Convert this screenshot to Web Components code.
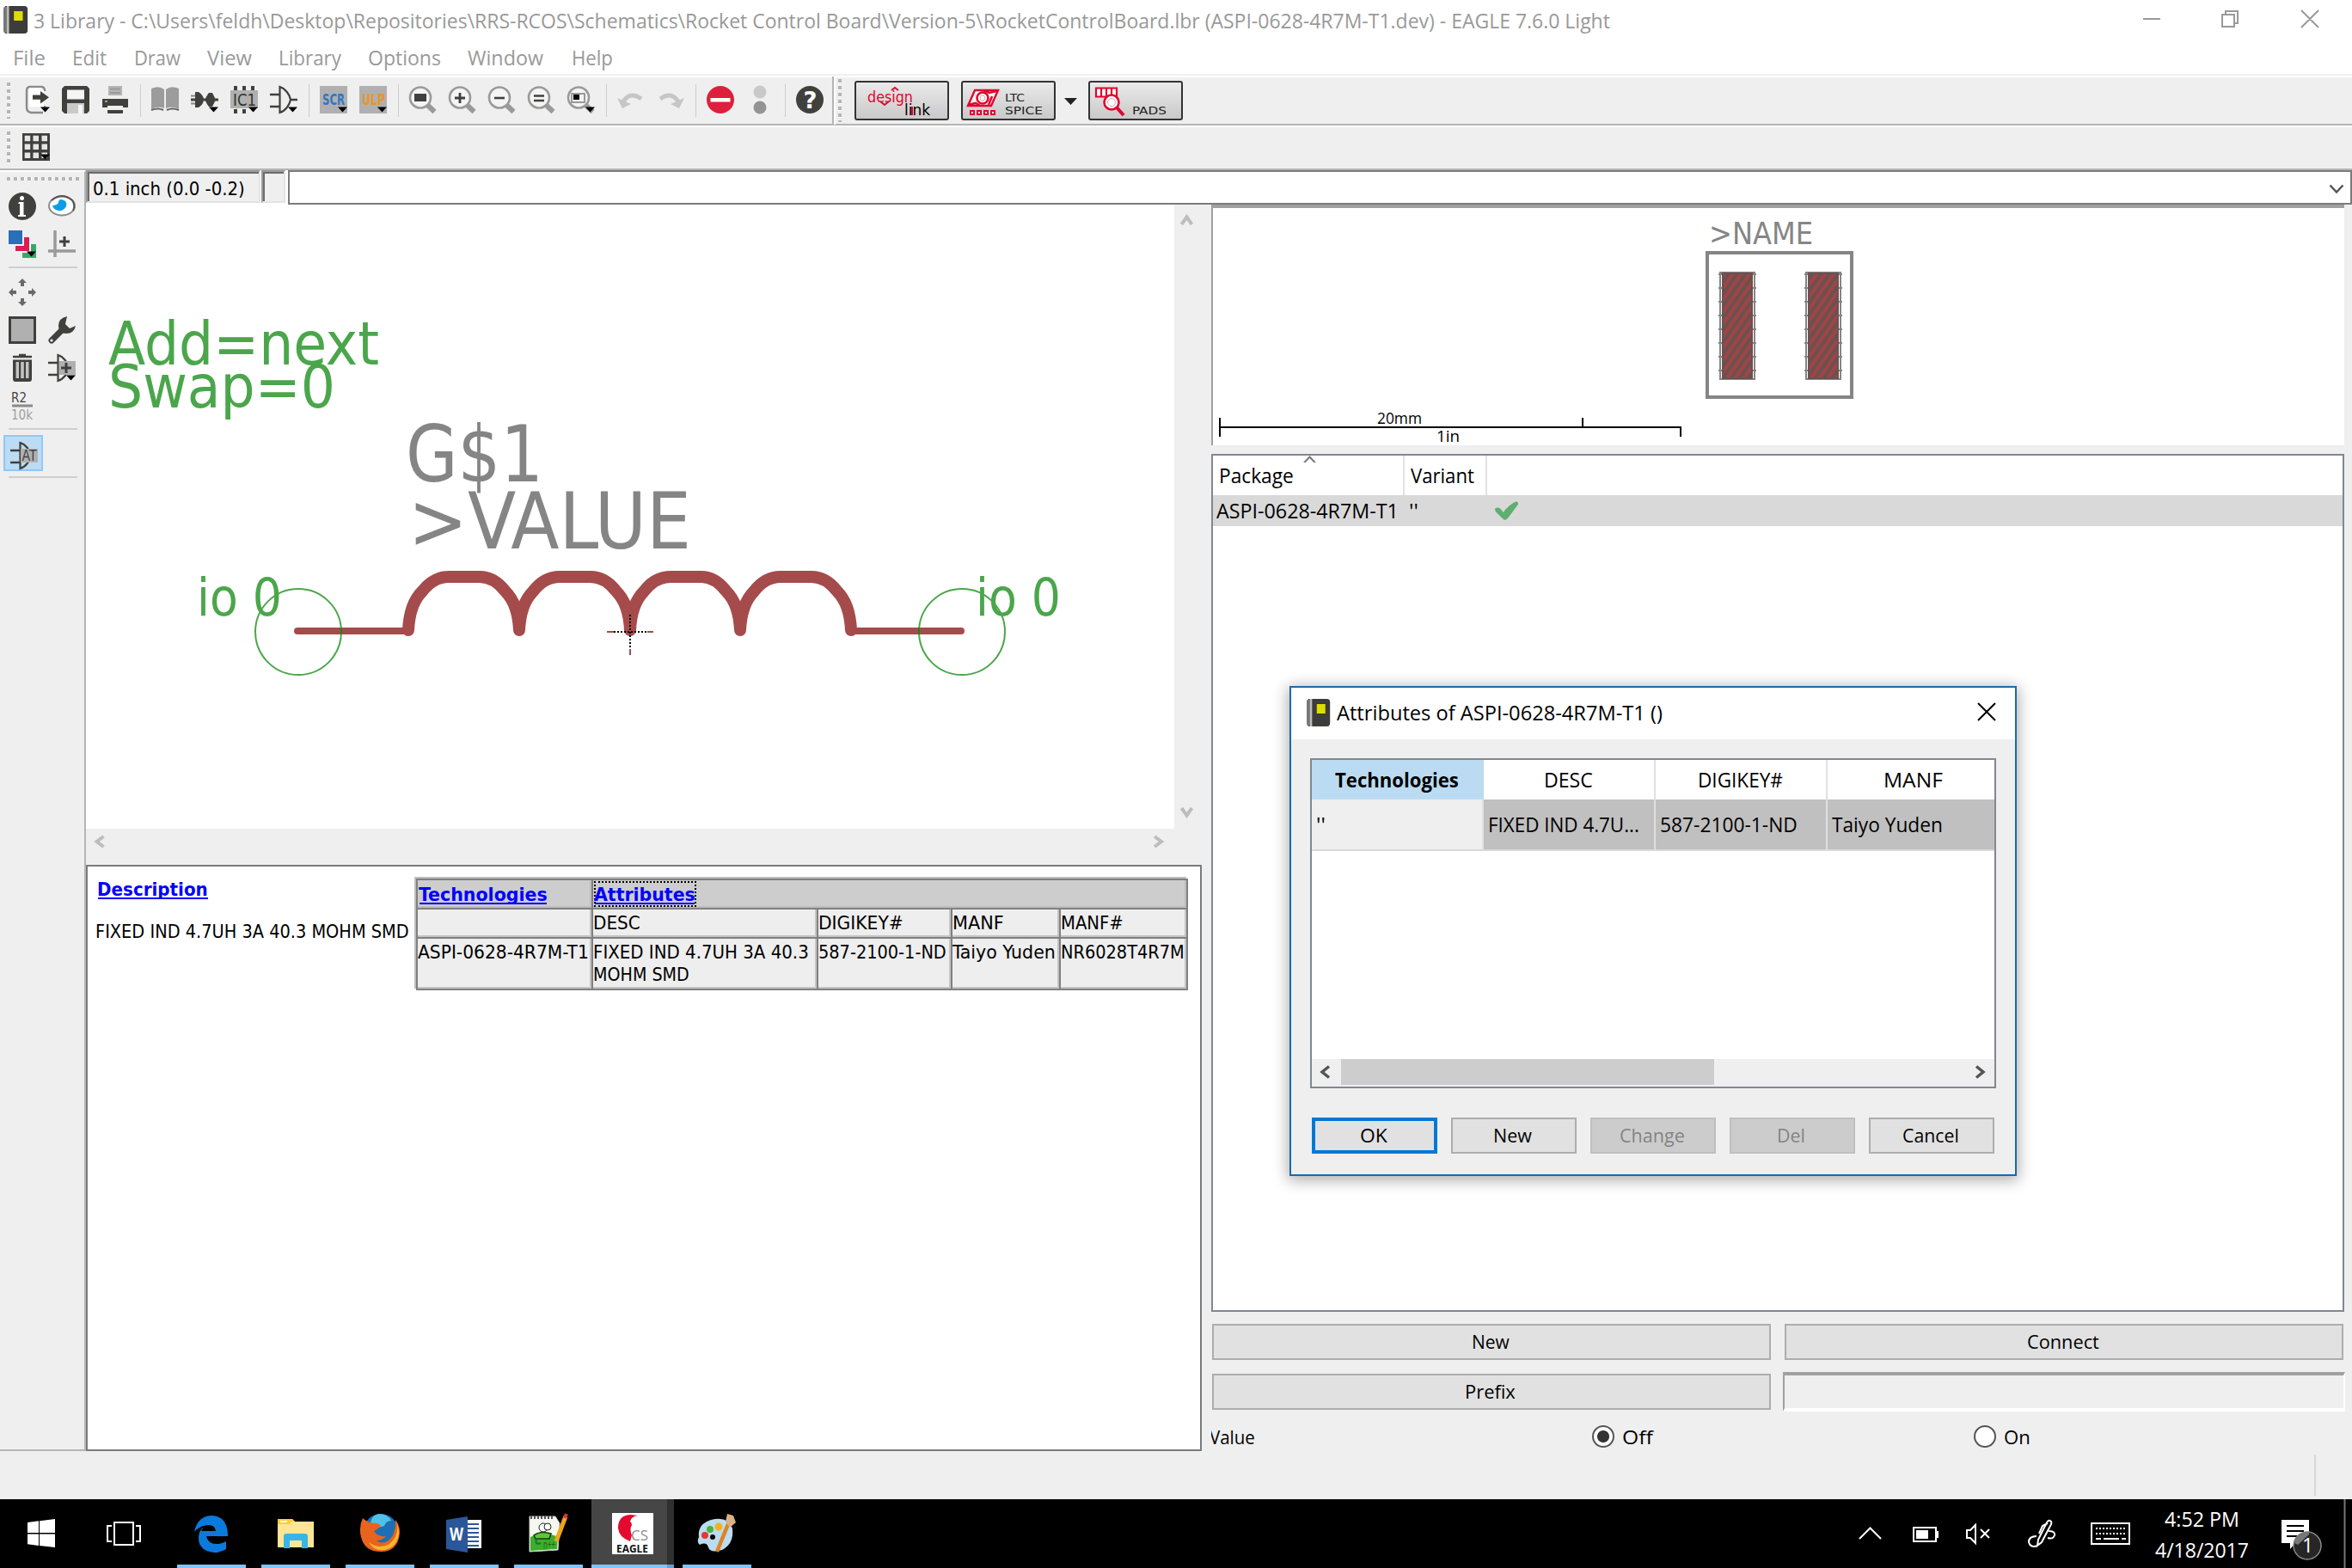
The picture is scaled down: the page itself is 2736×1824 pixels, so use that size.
<!DOCTYPE html>
<html lang="en"><head><meta charset="utf-8"><title>3 Library - EAGLE 7.6.0 Light</title>
<style>html,body{margin:0;padding:0;width:2736px;height:1824px;overflow:hidden;background:#efefef}</style></head>
<body><eagle-desktop></eagle-desktop>
<script>
const el=(name,make,after)=>customElements.define(name,class extends HTMLElement{
  connectedCallback(){if(this.shadowRoot)return;const r=this.attachShadow({mode:'open'});r.innerHTML=make(this);if(after)after(this,r);}
});

/* One line of text stretched to a given ink width. s = font size, w = width, f = t for the Tahoma-like face */
el('fit-text',h=>{
  const s=+(h.getAttribute('s')||24);
  const fam=h.getAttribute('f')==='t'?"'DejaVu Sans Condensed','DejaVu Sans',sans-serif":"'Open Sans','Noto Sans',sans-serif";
  return `<style>:host{display:block;flex:none;width:${h.getAttribute('w')}px;height:30px;line-height:30px;font-family:${fam};font-size:${s}px;white-space:nowrap}
  span{display:inline-block;transform-origin:0 50%;margin-left:${(-.045*s).toFixed(2)}px}</style><span><slot></slot></span>`;
},(h,r)=>{
  const s=+(h.getAttribute('s')||24),w=+h.getAttribute('w')+.08*s,sp=r.querySelector('span');
  const n=sp.getBoundingClientRect().width;if(n)sp.style.transform=`scaleX(${w/n})`;
});
const T=(w,t,s=24,f='')=>`<fit-text w="${w}" s="${s}" f="${f}">${t}</fit-text>`;

const D='#40403d',G='#9a9a9a',K='<path d="M21 24.5h11l-5.500 6z" fill="#000"/>';
const glass=(inner)=>`<path d="M21 22l8.500 8" stroke="${G}" stroke-width="6"/><circle cx="13" cy="13.500" r="12" fill="#f4f4f4" stroke="${G}" stroke-width="2.600"/>${inner}`;
const gate=`<path d="M0 10h11M0 24h11" stroke="${D}" stroke-width="2.500"/><path d="M11.500 1v30C18 29 23 22 24 16C23 10 18 3 11.500 1z" fill="#efefef" stroke="${D}" stroke-width="2.200"/>`;
const tx=(x,y,s,t,c,w,extra='')=>`<text x="${x}" y="${y}" font-size="${s}" fill="${c}" textLength="${w}" lengthAdjust="spacingAndGlyphs" ${extra}>${t}</text>`;
const ICONS={
open:`<path d="M26 6V5q0-4-4-4H9Q5 1 5 5v20q0 5 5 6h14M26 23v3" fill="none" stroke="#8a8a8a" stroke-width="2.400"/><path d="M8 2h14l3 4v18H8z" fill="#fff"/><path d="M12 10.500h9V6l10 7.200-10 7.200v-4.700h-9z" fill="${D}"/>${K}`,
save:`<path d="M3 0h26l3 3v26l-3 3H3l-3-3V3z" fill="${D}"/><path d="M6 4.500h20v11H6z" fill="#f5f5f5"/><path d="M6 20h20v12H6z" fill="#c9c9c9"/><path d="M19 22h5v10h-5z" fill="#f5f5f5"/>`,
print:`<path d="M8 0h16v11H8z" fill="#b4b4b4"/><path d="M10 3.500h12M10 8h12" stroke="${G}" stroke-width="2"/><path d="M1 15h30v10H25v-2H7v2H1z" fill="${D}"/><path d="M7 28h18v3q0 1-1 1H8q-1 0-1-1z" fill="${D}"/><path d="M4 18h3" stroke="#fff"/>`,
book:`<path d="M0 3q9-4 15 1v22Q8 23 0 27zM17 4q6-5 15-1v24q-8-4-15-1z" fill="#9c9c9c"/><path d="M0 28q8-3 14 0M18 28q6-3 14 0" fill="none" stroke="#666" stroke-width="2"/>`,
dev:`<path d="M0 16h12M15 16h17" stroke="${D}" stroke-width="3"/><path d="M5 7h4q6 4 6 9q0 5-6 9H5zM17 16q0-3 4-8h4l4 8-4 8h-4q-4-5-4-8z" fill="${D}"/><path d="M0 11.500h5M0 20.500h5" stroke="#888" stroke-width="2"/>${K}`,
ic:`<path d="M0 5h32v21H0z" fill="#b0b0b0"/><path d="M6 0v5M16 0v5M26 0v5M6 27v5M16 27v5" stroke="${D}" stroke-width="4"/>${tx(3,22.500,19,'IC1','#333',27)}${K}`,
gate:gate+`<path d="M24 16h8" stroke="${D}" stroke-width="2.500"/>${K}`,
scr:`<path d="M0 0h32v32H0z" fill="#b0b0b0"/>${tx(3,22,17,'SCR','#3077c2',26,'font-weight="700"')}${K}`,
ulp:`<path d="M0 0h32v32H0z" fill="#b0b0b0"/>${tx(3,22,17,'ULP','#e8952a',27,'font-weight="700"')}${K}`,
zfit:glass(`<path d="M6 9h14v9H6z" fill="${D}"/>`),
zin:glass(`<path d="M7 14h12M13 8v12" stroke="${D}" stroke-width="2.800"/>`),
zout:glass(`<path d="M7 14h12" stroke="${D}" stroke-width="2.600"/>`),
zeq:glass(`<path d="M7 11.500h12M7 17h12" stroke="${D}" stroke-width="2.600"/>`),
zsel:glass(`<path d="M5 9h15v10H5z" fill="none" stroke="${G}" stroke-width="2"/><path d="M7 10h7v6H7z"/>`)+K,
undo:`<path d="M6 20Q14 5 28 15" fill="none" stroke="#c6c6c6" stroke-width="5"/><path d="M0 14l6 12 10-5z" fill="#c6c6c6"/>`,
redo:`<g transform="matrix(-1 0 0 1 32 0)"><path d="M6 20Q14 5 28 15" fill="none" stroke="#c6c6c6" stroke-width="5"/><path d="M0 14l6 12 10-5z" fill="#c6c6c6"/></g>`,
stop:`<circle cx="16" cy="16" r="16" fill="#dd1f3d"/><path d="M4.500 14h23v4.500h-23z" fill="#fff"/>`,
go:`<circle cx="16" cy="7" r="7.500" fill="#c9c9c9"/><circle cx="16" cy="25" r="7.500" fill="#939393"/>`,
help:`<circle cx="16" cy="16" r="16" fill="${D}"/>${tx(8.500,25.500,26,'?','#fff',16,'font-weight="700"')}`,
grid:`<path d="M0 0h32v32H0z" fill="${D}"/><path d="M2.700 2.700h6.500v6.500H2.700zM12.500 2.700h6.500v6.500h-6.500zM22.500 2.700h6.500v6.500h-6.500zM2.700 12.500h6.500v6.500H2.700zM12.500 12.500h6.500v6.500h-6.500zM22.500 12.500h6.500v6.500h-6.500zM2.700 22.500h6.500v6.500H2.700zM12.500 22.500h6.500v6.500h-6.500zM22.500 22.500h6.500v6.500h-6.500z" fill="#e6e6e6"/>${K}`,
info:`<circle cx="16" cy="16" r="16" fill="${D}"/><circle cx="15.500" cy="6.500" r="2.500" fill="#fff"/><path d="M12 11h5.500v15H20v2h-9v-2h2V13h-2z" fill="#fff"/>`,
eye:`<ellipse cx="16" cy="15.500" rx="15" ry="11" fill="#fff" stroke="#8c8c8c" stroke-width="2"/><path d="M4 9Q16-1 28 9q4 6 1 12" stroke="#555" fill="none" stroke-width="2"/><path d="M5 15q5 0 7-3 0-4 3-4 8 1 6 8-3 6-9 5-6-1-7-6z" fill="#0b9ee6"/>`,
layers:`<path d="M16 16h16v16H16z" fill="#35aa68"/><path d="M8 8h18v18H8z" fill="#f3f3f3"/><path d="M8 8h16v16H8z" fill="#d91e54"/><path d="M0 0h18v18H0z" fill="#f3f3f3"/><path d="M0 0h16v16H0z" fill="#2a6fba"/>${K}`,
mark:`<path d="M8 0v31M0 24h32" stroke="${G}" stroke-width="3.500"/><path d="M13 13h12M19 7v12" stroke="${D}" stroke-width="3"/>`,
move:`<path d="M16 0l5 5h-3v4h-4V5h-3zM16 32l5-5h-3v-4h-4v4h-3zM0 16l5-5v3h4v4H5v3zM32 16l-5-5v3h-4v4h4v3z" fill="#6a6a6a"/>`,
group:`<path d="M1.500 1.500h29v29h-29z" fill="#b0b0b0" stroke="${D}" stroke-width="3"/>`,
wrench:`<path d="M4 28L17 15" stroke="${D}" stroke-width="7" stroke-linecap="round"/><circle cx="4" cy="28" r="1.600" fill="#fff"/><path d="M22 0q-10 2-10 11 0 9 9 9 9 0 11-9l-7 3-5-5z" fill="${D}"/>`,
trash:`<path d="M5 3h22M12 1h8" stroke="${D}" stroke-width="2.500"/><path d="M5 6.500h22v22q0 3.500-3 3.500H8q-3 0-3-3.500z" fill="${D}"/><path d="M8.500 9h3.500v19H8.500zM14.200 9h3.600v19h-3.600zM20 9h3.500v19H20z" fill="#c4c4c4"/>`,
addg:gate+`<path d="M13 8h19v16H13z" fill="#b0b0b0"/><path d="M15 16h12M21 10v12" stroke="${D}" stroke-width="3"/>${K}`,
r2:`${tx(3,12,15,'R2','#444',18)}<path d="M4 16h24" stroke="#8a8a8a" stroke-width="3"/>${tx(3,32,15,'10k','#a0a0a0',25)}`,
at:gate.replace('#efefef','#bcdaf2')+`<path d="M12 8h20v16H12z" fill="#b0b0b0"/>${tx(13.500,22,17,'AT','#444',17)}`,
app:`<path d="M2 0h24q4 0 4 4v24q0 4-4 4H2z" fill="#3c3c3a"/><path d="M1 1h3v30H1q-1 0-1-3V4Q0 1 1 1z" fill="#777"/><path d="M4 0h3v32H4z" fill="#bcbcbc"/><path d="M13 6h11v11H13z" fill="#dede00"/>`,
check:`<path d="M1 12q4-3 7 0l4 6Q17 8 27 1q4-1 4 4L18 27q-4 6-7 1L2 17z" fill="#5fae70"/>`
};
el('tool-icon',h=>`<style>:host{display:block;flex:none;width:32px;height:32px}svg{display:block;width:100%;height:100%;font-family:'DejaVu Sans Condensed','DejaVu Sans',sans-serif;overflow:visible}</style><svg viewBox="0 0 32 32" preserveAspectRatio="none">${ICONS[h.getAttribute('n')]}</svg>`);
const I=n=>`<tool-icon n="${n}"></tool-icon>`;

el('win-title',()=>`<style>:host{display:flex;height:48px;background:#fff;color:#999;align-items:flex-start}
 tool-icon{width:30px;margin:7px 0 0 4px}.t{margin:9px 0 0 6px;flex:1}svg{display:block;width:240px;height:48px}</style>
 <tool-icon n="app"></tool-icon><div class="t">${T(1832,'3 Library - C:\\Users\\feldh\\Desktop\\Repositories\\RRS-RCOS\\Schematics\\Rocket Control Board\\Version-5\\RocketControlBoard.lbr (ASPI-0628-4R7M-T1.dev) - EAGLE 7.6.0 Light')}</div>
 <svg viewBox="0 0 240 48" fill="none" stroke="#999" stroke-width="2" style="overflow:visible"><path d="M-3 22h20M89 17h14v14H89zM93 17v-4h14v14h-4M181 12l20 20M201 12l-20 20"/></svg>`);

el('menu-bar',()=>{let p=0;return `<style>:host{display:flex;height:38px;padding-top:4px;box-sizing:border-box;background:#fff;color:#999;border-bottom:0}</style>`+
 [['File',16,36],['Edit',85,38],['Draw',157,52],['View',242,50],['Library',325,71],['Options',429,83],['Window',545,86],['Help',666,46]].map(([t,x,w])=>{const m=x-p;p=x+w;return `<div style="margin-left:${m}px">${T(w,t)}</div>`}).join('')});

el('grip-dots',h=>{const v=h.hasAttribute('v');return `<style>:host{display:block;flex:none;${v?'width:4px;height:var(--l,42px)':'height:4px;width:84px'};background:repeating-linear-gradient(${v?'180deg':'90deg'},#b5b5b5 0 4px,#fff 4px 5px,#efefef 5px 8px)}</style>`});

el('plug-button',h=>{
 const k=h.getAttribute('k'),c='#e0062f';
 const art={
 design:`${tx(15,25,18,'design',c,53)}${tx(58,40,17,'link','#000',30)}<path d="M30 24l5 4 5-4M43 11l4-3 4 3M67 30v10" fill="none" stroke="${c}" stroke-width="2"/>`,
 ltc:`<path d="M16 11h27l-8 18H8z" fill="#fff" stroke="${c}" stroke-width="2.400"/><circle cx="25" cy="20" r="6.500" fill="#fff" stroke="${c}" stroke-width="2.600"/><circle cx="25" cy="20" r="3" fill="none" stroke="#e8a0ac"/><path d="M8 28l9-2 5 3M26 11l7 3 8-2M32 28l4-10" fill="none" stroke="${c}" stroke-width="2.600"/><path d="M11 35h4v4h-4zM19 35h4v4h-4zM27 35h4v4h-4zM35 35h4v4h-4z" fill="#fff" stroke="${c}" stroke-width="2"/>${tx(51,24,13,'LTC','#222',23)}${tx(51,38.500,13,'SPICE','#222',44)}`,
 pads:`<path d="M9 8.500h24v10H9zM15 8v10M21 8v10M27 8v10" fill="#fff" stroke="${c}" stroke-width="2.200"/><circle cx="27" cy="25" r="8.500" fill="#fff" stroke="${c}" stroke-width="2.600"/><circle cx="27" cy="25" r="4.500" fill="none" stroke="#e8a0ac"/><path d="M33 31l8 9" stroke="${c}" stroke-width="4"/>${tx(51,38.500,13,'PADS','#222',40)}`}[k];
 return `<style>:host{display:block;flex:none;width:110px;height:46px;box-sizing:border-box;border:2px solid #333;border-radius:3px;background:linear-gradient(#eaeaea,#c9c9c9)}svg{display:block;margin:-2px;font-family:'DejaVu Sans Condensed','DejaVu Sans',sans-serif}</style><svg width="110" height="46">${art}</svg>`});

el('tool-bar',()=>`<style>:host{display:flex;flex-direction:column}.a,.b{display:flex;background:#efefef;border-top:2px solid #fff;border-bottom:2px solid #b5b5b5;align-items:center;box-sizing:border-box}
 .a{height:58px}.a{padding-left:8px}.b{height:52px;padding-left:8px}.g{display:flex;gap:14px;padding:0 12.500px;align-items:center}.g+.g{border-left:1.500px solid #ccc;height:38px}.g tool-icon{margin-top:-2px}
 .g:nth-of-type(1){padding-left:14px}.line{width:2px;height:56px;background:#b5b5b5;border-right:2px solid #fff;margin-left:-3px}.line+grip-dots{margin:0 0 0 3px}
 plug-button{margin-left:15px}.top{height:2px;background:#f0f0f0}</style>
 <div class="top"></div>
 <div class="a"><grip-dots v></grip-dots><div class="g">${['open','save','print'].map(I).join('')}</div><div class="g">${['book','dev','ic','gate'].map(I).join('')}</div><div class="g">${['scr','ulp'].map(I).join('')}</div><div class="g">${['zfit','zin','zout','zeq','zsel'].map(I).join('')}</div><div class="g">${['undo','redo'].map(I).join('')}</div><div class="g">${['stop','go'].map(I).join('')}</div><div class="g">${I('help')}</div><div class="line"></div><grip-dots v style="--l:50px"></grip-dots>
 <plug-button k="design"></plug-button><plug-button k="ltc" style="margin-left:14px"></plug-button><svg width="38" height="46"><path d="M10 20h15l-7.500 8z" fill="#222"/></svg><plug-button k="pads" style="margin-left:0"></plug-button></div>
 <div class="b"><grip-dots v style="--l:38px"></grip-dots><div class="g">${I('grid')}</div></div>`);

el('side-bar',()=>`<style>:host{display:block;width:98px;box-sizing:content-box;height:1486px;border-right:2px solid #b5b5b5;border-bottom:2px solid #b5b5b5;border-top:2px solid #fff;background:#efefef}
 grip-dots{margin:6px 0 0 8px}.r{display:flex;gap:14px;padding-left:10px;margin-top:12px}.s{height:2px;width:80px;margin:10px 0 0 10px;background:#cfcfcf}
 .sel{width:42px;height:38px;border:2px solid #90c8f6;background:#bcdcf4;margin:6px 0 0 4px}.sel tool-icon{margin:6px 0 0 6px}</style>
 <grip-dots></grip-dots><div class="r" style="margin-top:14px">${I('info')}${I('eye')}</div><div class="r">${I('layers')}${I('mark')}</div><div class="s"></div>
 <div class="r">${I('move')}</div><div class="r">${I('group')}${I('wrench')}</div><div class="r">${I('trash')}${I('addg')}</div><div class="r">${I('r2')}</div><div class="s"></div>
 <div class="sel">${I('at')}</div><div class="s" style="margin-top:6px"></div>`);

el('command-row',()=>`<style>:host{display:flex;height:40px;background:#fff;align-items:flex-start}
 .c{box-sizing:border-box;height:38px;background:#efefef;border-style:solid;border-width:2px;border-color:#9a9a9a #e3e3e3 #e3e3e3 #9a9a9a;box-shadow:inset 2px 2px #6c6c6c}
 .k{flex:1;box-sizing:border-box;height:40px;border:2px solid #7b7b7b;background:#fff;display:flex;justify-content:flex-end}</style>
 <div class="c" style="width:203px;padding:5px 0 0 7px">${T(175,'0.1 inch (0.0 -0.2)',22,'t')}</div><div class="c" style="width:28px;margin:0 3px 0 1px"></div>
 <div class="k"><svg width="30" height="36"><path d="M6.500 15.500l7.500 8 7.500-8" fill="none" stroke="#555" stroke-width="2.500"/></svg></div>`);

el('symbol-canvas',()=>`<style>:host{display:grid;grid-template:726px 42px/1266px 34px;background:#efefef}svg{display:block;font-family:'DejaVu Sans Condensed','DejaVu Sans',sans-serif}</style>
 <svg width="1266" height="726" viewBox="100 238 1266 726"><path d="M100 238h1266v726H100z" fill="#fff"/>
 ${tx(126,424,70,'Add=next','#4ba64b',315)}${tx(126,474,70,'Swap=0','#4ba64b',264)}${tx(472,560,90,'G$1','#858585',160)}${tx(475,638,90,'&gt;VALUE','#858585',329)}
 ${tx(229,716,60,'io 0','#4ba64b',99)}${tx(1135,716,60,'io 0','#4ba64b',99)}
 <g fill="none" stroke="#a54b4b" stroke-linecap="round"><path stroke-width="8" d="M346 734H475M990 734H1118"/><path stroke-width="14" stroke-linejoin="round" d="M475 733C476 712 481 698 491 688Q504 671 522 671h36Q575 671 588 688C598 698 603 712 604 733C605 712 610 698 620 688Q633 671 651 671h36Q704 671 717 688C727 698 732 712 733 733C734 712 739 698 749 688Q762 671 780 671h36Q832 671 845 688C855 698 860 712 861 733C862 712 867 698 877 688Q890 671 908 671h36Q961 671 974 688C984 698 989 712 990 733"/></g>
 <g fill="none" stroke="#4ba64b" stroke-width="2"><circle cx="347" cy="735" r="50"/><circle cx="1119" cy="735" r="50"/></g><path d="M397 730v8M1069 730v8" stroke="#2f7a1a" stroke-width="2"/>
 <path d="M706 735h8M753 735h7M733 755v7" stroke="#a54b4b" stroke-width="2"/><path d="M714 735h39M733 715v40" stroke="#000" stroke-width="2" stroke-dasharray="2 2"/></svg>
 <svg width="34" height="726" fill="none" stroke="#bdbdbd" stroke-width="4"><path d="M8.500 23l6-8.500 6 8.500M8.500 702l6 8.500 6-8.500"/></svg>
 <svg width="1266" height="42" fill="none" stroke="#bdbdbd" stroke-width="4"><path d="M20.500 9l-8 6 8 6M1243 9l8 6-8 6"/></svg>`);

el('description-pane',()=>`<style>:host{display:flex;box-sizing:border-box;width:1298px;height:682px;border:2px solid #7b7b7b;background:#fff;color:#000}
 .l{width:382px}.b{font-weight:700;color:#00f}.u{border-bottom:2px solid #00f;height:24px}
 .t{display:grid;grid-template-columns:202px 260px 154px 124px 146px;grid-template-rows:32px 32px 58px;gap:2px;background:#808080;border:2px solid #808080;box-shadow:-2px -2px #bdbdbd;width:894px;height:126px;margin-top:14px;align-self:flex-start;box-sizing:content-box}
 .t>div{background:#eee;padding:1px 0 0 1px;box-shadow:inset -2px -2px #c4c4c4}.t>.h{background:#cdcdcd;box-shadow:inset -2px -2px #bdbdbd;padding:0 0 0 2px}.c4{grid-column:span 4}.f{outline:2px dotted #000;outline-offset:-1px;width:117px;height:28px;margin-top:1px}</style>
 <div class="l"><div class="b u" style="margin:12px 0 0 12px;width:128px">${T(127,'Description',22,'t')}</div><div style="margin:23px 0 0 10px">${T(363,'FIXED IND 4.7UH 3A 40.3 MOHM SMD',22,'t')}</div></div>
 <div class="t"><div class="h b"><div class="u" style="width:148px;margin-top:2px">${T(148,'Technologies',22,'t')}</div></div><div class="h b c4"><div class="f"><div class="u" style="width:116px;margin-top:2px">${T(116,'Attributes',22,'t')}</div></div></div>
 <div></div><div>${T(53,'DESC',22,'t')}</div><div>${T(97,'DIGIKEY#',22,'t')}</div><div>${T(58,'MANF',22,'t')}</div><div>${T(71,'MANF#',22,'t')}</div>
 <div>${T(197,'ASPI-0628-4R7M-T1',22,'t')}</div><div>${T(249,'FIXED IND 4.7UH 3A 40.3',22,'t')}<div style="margin-top:-4px">${T(110,'MOHM SMD',22,'t')}</div></div><div>${T(147,'587-2100-1-ND',22,'t')}</div><div>${T(118,'Taiyo Yuden',22,'t')}</div><div>${T(142,'NR6028T4R7M',22,'t')}</div></div>`);

el('package-view',()=>{
 const pad=x=>`<path d="M${x+1} 317h40v124h-40z" fill="#fff" stroke="#858585" stroke-width="2"/><path d="M${x+1} 318v122M${x+41} 318v122" stroke="#858585" stroke-width="4" stroke-dasharray="2 14"/><path d="M${x+4} 318h34v122h-34z" fill="url(#hatch)" stroke="#6c5050" stroke-width="2"/>`;
 return `<style>:host{display:block;box-sizing:border-box;width:1318px;height:280px;border-left:2px solid #a0a0a0;border-top:4px solid #a0a0a0;background:#fff}svg{display:block;font-family:'DejaVu Sans Condensed','DejaVu Sans',sans-serif}</style>
 <svg width="1314" height="276" viewBox="1411 242 1314 276"><defs><pattern id="hatch" width="8" height="8" patternUnits="userSpaceOnUse" patternTransform="rotate(35)"><path d="M0 0h8v8H0z" fill="#6c5050"/><path d="M0 0h4v8H0z" fill="#a04444"/></pattern></defs>
 ${tx(1988,284,36,'&gt;NAME','#858585',121)}<path d="M1986 294h168v168h-168z" fill="none" stroke="#858585" stroke-width="4"/>${pad(2000)}${pad(2100)}
 <path d="M1419 497h537M1419 486v22M1841 486v11M1955 497v11" stroke="#000" stroke-width="2" fill="none"/><g style="font-family:'Open Sans'">${tx(1602,493,18,'20mm','#000',52)}${tx(1671,514,18,'1in','#000',27)}</g></svg>`});

el('package-list',()=>`<style>:host{display:block;box-sizing:border-box;width:1318px;height:998px;border:2px solid #828790;background:#fff;color:#000;margin-top:10px}
 .h{display:flex;height:46px}.h>div{box-sizing:border-box;border-right:2px solid #e2e2e2}.r{display:flex;height:36px;background:#d9d9d9}</style>
 <div class="h"><div style="width:223px;padding:8px 0 0 8px"><svg style="display:block;margin:-8px 0 0 96px" width="20" height="8"><path d="M1.500 9l7-7.500L15.500 9" fill="none" stroke="#777" stroke-width="2"/></svg>${T(85,'Package',23)}</div><div style="width:96px;padding:8px 0 0 8px">${T(72,'Variant',23)}</div></div>
 <div class="r"><div style="padding:3px 0 0 5px;width:225px;box-sizing:border-box">${T(210,'ASPI-0628-4R7M-T1',23)}</div><div style="padding-top:3px;width:96px;margin-left:4px">${T(9,"''",23)}</div><tool-icon n="check" style="width:29px;height:23px;margin:7px 0 0 2px"></tool-icon></div>`);

/* Windows push button: w = width, t = text ink width, variants focus / off */
el('push-button',h=>{const v=h.getAttribute('v');return `<style>:host{display:flex;justify-content:center;box-sizing:border-box;width:${h.getAttribute('w')}px;height:42px;border:2px solid #adadad;background:#e1e1e1;color:#000;padding:4px 3px 0 0}
 ${v==='focus'?':host{border:4px solid #0078d7;padding-top:2px}':''}${v==='off'?':host{background:#ccc;border-color:#bfbfbf;color:#838383}':''}</style>${T(h.getAttribute('t'),h.textContent,22.5)}`});

el('package-panel',()=>`<style>:host{display:block;width:1327px;padding-left:9px;color:#000}.b{display:grid;grid-template-columns:650px 650px;column-gap:16px;row-gap:16px;padding:14px 0 0 1px}
 .e{box-sizing:border-box;width:654px;height:46px;margin:-2px 0 -2px -2px;border-style:solid;border-width:4px 2px;border-color:#a0a0a0 #fff #fff #a0a0a0}
 .v{display:flex;margin-top:15px;align-items:center;overflow:hidden}i{box-sizing:border-box;width:26px;height:26px;border:2px solid #555;border-radius:50%;background:#fff;flex:none}i.on{background:radial-gradient(circle,#333 0 6.500px,#fff 7.500px)}.v fit-text{margin-top:2px}</style>
 <package-view></package-view><package-list></package-list>
 <div class="b"><push-button w="650" t="42">New</push-button><push-button w="650" t="82">Connect</push-button><push-button w="650" t="57">Prefix</push-button><div class="e"></div></div>
 <div class="v"><div style="margin-left:-1px">${T(51,'Value',22.5)}</div><i class="on" style="margin:0 10px 0 393px"></i>${T(34,'Off',22.5)}<i style="margin:0 10px 0 374px"></i>${T(29,'On',22.5)}</div>`);

el('attr-dialog',()=>`<style>:host{display:block;position:absolute;left:1500px;top:798px;box-sizing:border-box;width:846px;height:570px;border:2px solid #1b6aa8;background:#efefef;color:#000;box-shadow:0 3px 16px 2px rgba(0,0,0,.32)}
 .h{display:flex;height:60px;background:#fff}.h tool-icon{width:29px;margin:13px 7px 0 18px}
 .t{box-sizing:border-box;width:798px;height:384px;margin:22px 0 0 22px;border:2px solid #828790;background:#fff;display:flex;flex-direction:column}
 .g{display:grid;grid-template-columns:200px 200px 200px 194px;grid-template-rows:46px 60px}.g>div{box-sizing:border-box;border-right:2px solid #e0e0e0;display:flex;align-items:center;padding-bottom:1px}.g>.x{justify-content:center}.g>.y{background:#c0c0c0;border-bottom:2px solid #d9d9d9;padding-left:6px}.g>div:nth-child(4n){border-right:0}
 .s{margin-top:auto;height:32px;background:#efefef;display:flex}.th{width:434px;height:30px;background:#cdcdcd}
 .b{display:flex;gap:16px;margin:34px 0 0 24px}</style>
 <div class="h"><tool-icon n="app"></tool-icon><div style="margin-top:14px;flex:1">${T(377,'Attributes of ASPI-0628-4R7M-T1 ()',23.5)}</div><svg width="60" height="60"><path d="M17 18l20 20M37 18L17 38" stroke="#000" stroke-width="2"/></svg></div>
 <div class="t"><div class="g"><div class="x" style="background:#bbdbf2;border-right-color:#bbdbf2;font-weight:700">${T(142,'Technologies',23)}</div><div class="x">${T(55,'DESC',23)}</div><div class="x">${T(97,'DIGIKEY#',23)}</div><div class="x" style="padding-left:6px">${T(67,'MANF',23)}</div>
 <div class="y" style="background:#efefef">${T(9,"''",23)}</div><div class="y">${T(174,'FIXED IND 4.7U...',23)}</div><div class="y">${T(158,'587-2100-1-ND',23)}</div><div class="y">${T(127,'Taiyo Yuden',23)}</div></div>
 <div class="s"><svg width="34" height="32"><path d="M20 8.500l-8 6.500 8 6.500" fill="none" stroke="#555" stroke-width="3.500"/></svg><div class="th"></div><svg style="margin-left:auto" width="34" height="32"><path d="M13 8.500l8 6.500-8 6.500" fill="none" stroke="#555" stroke-width="3.500"/></svg></div></div>
 <div class="b"><push-button w="146" t="30" v="focus">OK</push-button><push-button w="146" t="43">New</push-button><push-button w="146" t="74" v="off">Change</push-button><push-button w="146" t="31" v="off">Del</push-button><push-button w="146" t="64">Cancel</push-button></div>`);

const TASK=[
[0,80,`<path d="M32 1771l13-1.700V1783H32zM46 1769.200L64 1767v16H46zM32 1784.500h13V1798l-13-1.700zM46 1784.500h18V1800l-18-2z" fill="#fff"/>`],
[0,0,`<path d="M133 1771h22v26h-22zM130 1775h-5v18h5M158 1775h5v18h-5" fill="none" stroke="#fff" stroke-width="2"/>`],
[206,286,`<path d="M226 1782q4-19 21-19 18 1 18 24h-25q2 9 12 9 6 0 11-3v9q-6 4-14 4-18-2-18-17 0-9 6-12-3 4-3 4h17q-1-7-8-7-10 0-17 8z" fill="#0a7add"/>`],
[304,384,`<path d="M323 1767h17l3 3h22v30h-42z" fill="#ffe594"/><path d="M323 1767h17l3 3h-4l-2 3h-14z" fill="#fbcd3f"/><path d="M326 1769h8v2h-8z" fill="#fff"/><path d="M330 1801v-14q0-3 3-3h22q3 0 3 3v14h-7v-9h-14v9z" fill="#38b5e8"/>`],
[402,482,`<circle cx="443" cy="1781" r="20" fill="#1d6fb5"/><path d="M441 1761q10 0 14 8-6 0-8 6-10 4-16-4 2-9 10-10z" fill="#4fc1e8"/><path d="M422 1766q-5 10-2 22 4 17 23 17 20 0 22-22 0-9-5-15 1 16-8 24-8 5-14 0 7 0 11-5-10 1-14-6l8-5q-2-5-8-4-8-1-13-6z" fill="#e8641c"/><path d="M462 1772q2 15-9 24-12 7-24-2 6 11 19 9 15-4 16-20 0-6-2-11z" fill="#f8b62d"/>`],
[500,580,`<path d="M538 1768h22v33h-22z" fill="#fff"/><path d="M543 1773h14M543 1778h14M543 1783h14M543 1788h14M543 1793h14M543 1798h14" stroke="#2b579a" stroke-width="2"/><path d="M519 1768l25-4v42l-25-4z" fill="#2b579a"/>${tx(523,1792,21,'W','#fff',16,'font-weight="700"')}`],
[598,678,`<path d="M616 1764h30l5 8-2 31-33 2z" fill="#f4f8ee" stroke="#ccc"/><path d="M617 1788q16-8 32 0l-1 14-31 2z" fill="#3cae2a"/><path d="M617 1765h26" stroke="#555" stroke-width="4" stroke-dasharray="2 2"/><circle cx="632" cy="1777" r="5" fill="#fff" stroke="#222"/><circle cx="637" cy="1776" r="4" fill="#fff" stroke="#222"/><path d="M621 1786q8-6 20-2l-2 6h-16z" fill="#5fc53b" stroke="#173c0e" stroke-width="1.500"/><path d="M624 1790q-2 8 5 5" fill="none" stroke="#174" stroke-width="2"/>${tx(632,1802,15,'n++','#1c5f12',14)}<path d="M647 1793l11-29" stroke="#f1a51c" stroke-width="5"/><path d="M657 1766l2-5" stroke="#d33" stroke-width="4"/>`],
[688,784,`<path d="M712 1760h48v48h-48z" fill="#fff"/><path d="M742 1763q-8 1-9 7 2 1 2 4-3 5 0 12l-2 7q-14-5-14-17 1-14 15-14z" fill="#e4092f"/>${tx(734,1792,17,'CS','#8c8c8c',20)}${tx(717,1806,12,'EAGLE','#111',37,'font-weight="700"')}`],
[794,874,`<path d="M813 1788q-2-15 14-20 20-5 25 10 2 18-12 25-14 4-16-3-2-7-10-3-4-3-1-9z" fill="#bcdcf0"/><circle cx="829" cy="1788" r="3" fill="#000"/><circle cx="820" cy="1786" r="4" fill="#e5392d"/><circle cx="826" cy="1779" r="4" fill="#4cb13d"/><circle cx="836" cy="1776" r="4.500" fill="#f4b01d"/><path d="M834 1805l13-32" stroke="#dd8426" stroke-width="4.500"/><path d="M844 1770l2-9 7 2 3 8-7 6z" fill="#d8b184"/>`]];
el('task-bar',()=>`<style>:host{display:flex;height:80px;background:#000;color:#fff;justify-content:space-between}svg{display:block;font-family:'Open Sans',sans-serif}.c{width:110px;padding-top:8px}</style>
 <svg width="900" height="80" viewBox="0 1744 900 80"><path d="M688 1744h88v80h-88z" fill="#464646"/><path d="M776 1744h8v80h-8z" fill="#303030"/>${TASK.map(([a,b,s])=>(a?`<path d="M${a} 1820H${b}v4H${a}z" fill="#83c3f7"/>`:'')+s).join('')}<path d="M776 1820h8v4h-8z" fill="#6ba0cc"/></svg>
 <div style="display:flex"><svg width="350" height="80" viewBox="2150 1744 350 80" fill="none" stroke="#fff" stroke-width="2"><path d="M2163 1790l12.500-12.500 12.500 12.500"/><path d="M2226 1777h26v16h-26zM2254 1781v8"/><path d="M2229 1780h14v10h-14z" fill="#fff" stroke="none"/>
 <path d="M2288 1780h4l6-6v21l-6-6h-4zM2304 1779l10 10M2314 1779l-10 10"/><path d="M2371 1791l10-20q3-4 5-1 1 2-1 5l-10 19-5 4zM2382 1772l-6 3-4 9M2369 1787q-9 0-9 7 2 7 10 4M2383 1781q8 0 7 5-2 5-8 3" /><path d="M2433 1772h44v24h-44z"/><path d="M2438 1778h34M2438 1784h34" stroke-dasharray="2 2"/><path d="M2438 1790h6M2447 1790h18M2468 1790h5"/></svg>
 <div class="c"><div style="margin:0 0 0 19px">${T(85,'4:52 PM')}</div><div style="margin:6px 0 0 8px">${T(107,'4/18/2017')}</div></div>
 <svg width="126" height="80" viewBox="2610 1744 126 80"><path d="M2654 1768h32v27h-16l-6 7v-7h-10z" fill="#fff"/><path d="M2660 1775h20M2660 1781h20M2660 1787h14" stroke="#000" stroke-width="2"/><circle cx="2684" cy="1798" r="16" fill="#262626" stroke="#8a8a8a" stroke-width="1.500"/><path d="M2669 1795q1-10 12-13l5-.2V1785l-13 12z" fill="#777"/>${tx(2678,1806,23,'1','#fff',13)}<path d="M2727.500 1744v80" stroke="#777" stroke-width="2"/></svg></div>`);

el('eagle-desktop',()=>`<style>:host{display:flex;flex-direction:column;width:2736px;height:1824px;position:relative;background:#efefef}.m{display:flex;flex:none;height:1490px}.r{width:2636px}.w{display:flex}.st{height:56px;display:flex;justify-content:flex-end;box-sizing:border-box;padding:4px 42px 4px 0}.st div{width:2px;background:#d7d7d7}</style>
 <win-title></win-title><menu-bar></menu-bar><tool-bar></tool-bar>
 <div class="m"><side-bar></side-bar><div class="r"><command-row></command-row><div class="w"><div style="width:1300px"><symbol-canvas></symbol-canvas><description-pane></description-pane></div><package-panel></package-panel></div></div></div>
 <div class="st"><div></div></div><task-bar></task-bar><attr-dialog></attr-dialog>`);
</script></body></html>
